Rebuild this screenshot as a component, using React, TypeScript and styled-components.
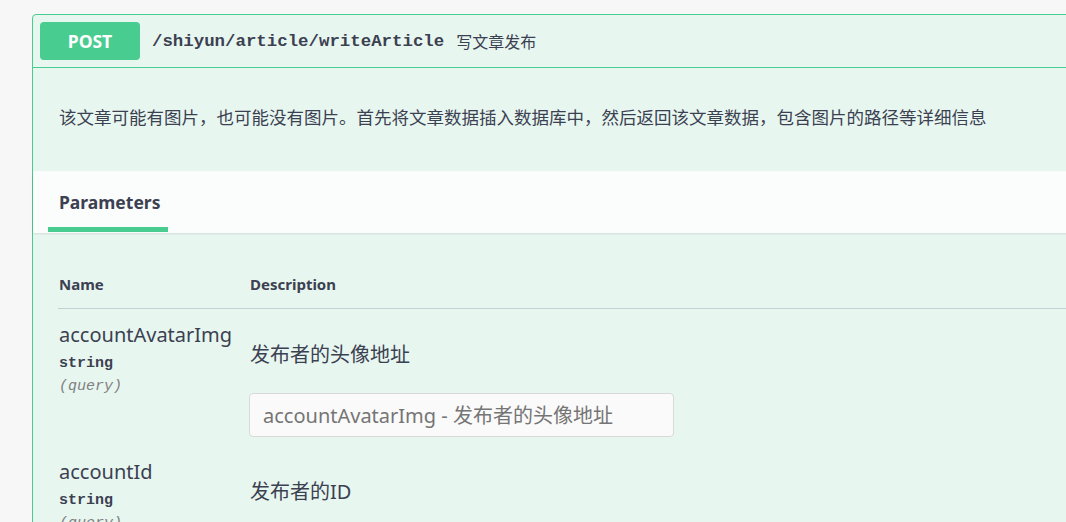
import React from "react";
import styled, { createGlobalStyle } from "styled-components";

const Global = createGlobalStyle`
  html, body { margin: 0; padding: 0; background: #f7f7f7; overflow: hidden; }
  body { font-family: "Noto Sans", "Noto Sans CJK SC", sans-serif; color: #3b4151; }
  * { box-sizing: border-box; }
`;

const Page = styled.div`
  width: 1066px;
  height: 522px;
  overflow: hidden;
  padding: 14px 0 0 32px;
`;

const Block = styled.div`
  width: 1200px;
  border: 1px solid #49cc90;
  border-radius: 4px;
  background: #e8f6f0;
`;

const Summary = styled.div`
  display: flex;
  align-items: center;
  height: 53px;
  padding: 0 7px;
  border-bottom: 1px solid #49cc90;
`;

const Method = styled.span`
  display: inline-flex;
  align-items: center;
  justify-content: center;
  width: 100px;
  height: 38px;
  border-radius: 4px;
  background: #49cc90;
  color: #fff;
  font-weight: 700;
  font-size: 17.5px;
`;

const Path = styled.span`
  margin-left: 12px;
  font-family: "Liberation Mono", monospace;
  font-weight: 700;
  font-size: 17.4px;
  color: #3b4151;
`;

const SummaryDesc = styled.span`
  margin-left: 12px;
  font-size: 16px;
  color: #3b4151;
`;

const Description = styled.div`
  padding: 34px 26px 38px;
  font-size: 17.5px;
  line-height: 31px;
  color: #3b4151;
`;

const TabHeader = styled.div`
  display: flex;
  height: 62px;
  padding: 0 15px;
  background: rgba(255, 255, 255, 0.8);
  box-shadow: 0 1px 2px rgba(0, 0, 0, 0.1);
`;

const Tab = styled.div`
  position: relative;
  display: flex;
  align-items: center;
  width: 120px;
  padding-left: 11px;
  font-size: 17.5px;
  font-weight: 700;
  color: #3b4151;
  &::after {
    content: "";
    position: absolute;
    left: 0;
    right: 0;
    bottom: 1px;
    height: 5px;
    background: #49cc90;
  }
`;

const Table = styled.div`
  padding: 41px 25px 0;
`;

const HeadRow = styled.div`
  display: grid;
  grid-template-columns: 191px 1fr;
  padding: 0 0 14px 1px;
  border-bottom: 1px solid rgba(59, 65, 81, 0.2);
  font-size: 15px;
  font-weight: 700;
  line-height: 20px;
`;

const Row = styled.div`
  display: grid;
  grid-template-columns: 190px 1fr;
  padding: 13px 0 9px 1px;
`;

const NameCell = styled.div`
  display: flex;
  flex-direction: column;
`;

const ParamName = styled.div`
  font-size: 20px;
  line-height: 26px;
  color: #3b4151;
`;

const ParamType = styled.div`
  margin-top: 3px;
  font-family: "Liberation Mono", monospace;
  font-size: 15px;
  font-weight: 700;
  line-height: 26px;
  color: #3b4151;
`;

const ParamIn = styled.div`
  font-family: "Liberation Mono", monospace;
  font-size: 15px;
  font-style: italic;
  line-height: 20px;
  color: #808080;
`;

const DescCell = styled.div`
  display: flex;
  flex-direction: column;
  align-items: flex-start;
  padding-top: 20px;
`;

const DescText = styled.div`
  margin-left: 1px;
  font-size: 20px;
  line-height: 26px;
  color: #3b4151;
`;

const Input = styled.input`
  margin-top: 25px;
  width: 425px;
  height: 44px;
  padding: 0 13px;
  border: 1px solid #d9d9d9;
  border-radius: 4px;
  background: #fafafa;
  font-family: "Noto Sans", "Noto Sans CJK SC", sans-serif;
  font-size: 20px;
  color: #3b4151;
  outline: none;
  &::placeholder { color: #757575; }
`;

const params = [
  { name: "accountAvatarImg", desc: "发布者的头像地址", input: true },
  { name: "accountId", desc: "发布者的ID", input: false },
];

export default function App() {
  return (
    <>
      <Global />
      <Page>
        <Block>
          <Summary>
            <Method>POST</Method>
            <Path>/shiyun/article/writeArticle</Path>
            <SummaryDesc>写文章发布</SummaryDesc>
          </Summary>
          <Description>
            该文章可能有图片，也可能没有图片。首先将文章数据插入数据库中，然后返回该文章数据，包含图片的路径等详细信息
          </Description>
          <TabHeader>
            <Tab>Parameters</Tab>
          </TabHeader>
          <Table>
            <HeadRow>
              <div>Name</div>
              <div>Description</div>
            </HeadRow>
            {params.map((p) => (
              <Row key={p.name}>
                <NameCell>
                  <ParamName>{p.name}</ParamName>
                  <ParamType>string</ParamType>
                  <ParamIn>(query)</ParamIn>
                </NameCell>
                <DescCell>
                  <DescText>{p.desc}</DescText>
                  {p.input && <Input placeholder={`${p.name} - ${p.desc}`} />}
                </DescCell>
              </Row>
            ))}
          </Table>
        </Block>
      </Page>
    </>
  );
}
